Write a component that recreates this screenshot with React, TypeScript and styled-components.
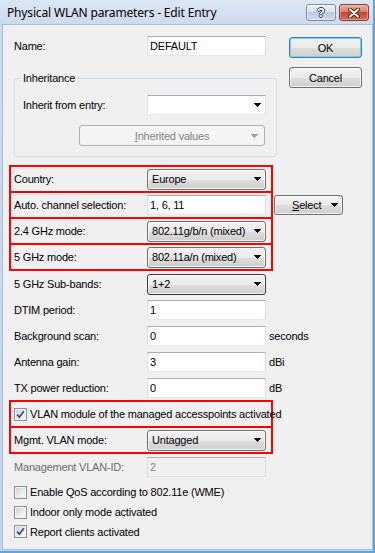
import React from "react";
import styled, { createGlobalStyle, css } from "styled-components";

const GlobalStyle = createGlobalStyle`
  html, body { margin: 0; padding: 0; background: #ffffff; }
  body {
    font-family: "Liberation Sans", Arial, sans-serif;
    font-size: 11px;
    letter-spacing: -0.2px;
    color: #000;
  }
  * { box-sizing: border-box; }
`;

const Window = styled.div`
  width: 375px;
  height: 553px;
  display: flex;
  flex-direction: column;
  background: linear-gradient(#dce7f5 0px, #ccdbee 24px, #c3d5eb 100%);
  border-right: 2px solid #5aa9e3;
  border-bottom: 2px solid #5aa9e3;
  overflow: hidden;
`;

const TitleBar = styled.div`
  height: 24px;
  flex-shrink: 0;
  display: flex;
  align-items: center;
  justify-content: space-between;
  padding: 0 4px 0 7px;
`;

const TitleText = styled.span`
  font-family: "Noto Sans", "Open Sans", sans-serif;
  font-size: 12px;
  letter-spacing: -0.16px;
  color: #000;
  padding-top: 1px;
`;

const CaptionGroup = styled.div`
  align-self: flex-start;
  margin-top: 4px;
  display: flex;
  gap: 3px;
`;

const CaptionButton = styled.div<{ $kind: "help" | "close" }>`
  width: 30px;
  height: 17px;
  border-radius: 3px;
  display: flex;
  align-items: center;
  justify-content: center;
  ${(p) =>
    p.$kind === "help"
      ? css`
          border: 1px solid #7d8ca6;
          background: linear-gradient(#eef3fa 0%, #d6e1f0 45%, #bccde4 50%, #cbd9ec 100%);
          box-shadow: inset 0 0 0 1px rgba(255, 255, 255, 0.5);
        `
      : css`
          border: 1px solid #8a3a2f;
          background: linear-gradient(#eab0a2 0%, #d8806e 45%, #c4432f 50%, #d4705a 100%);
          box-shadow: inset 0 0 0 1px rgba(255, 200, 190, 0.45);
        `}
`;

const HelpGlyph = styled.span`
  font-family: "Liberation Sans", Arial, sans-serif;
  font-weight: bold;
  font-size: 13px;
  line-height: 13px;
  color: #ffffff;
  letter-spacing: 0;
  text-shadow: 1px 0 0 #2b3a57, -1px 0 0 #2b3a57, 0 1px 0 #2b3a57, 0 -1px 0 #2b3a57;
`;

const Client = styled.div`
  flex: 1;
  margin: 0 0 1px 2px;
  border: 1px solid #a6bcd8;
  background: #f0f0f0;
  display: flex;
  padding: 11px 0 0 11px;
`;

const FormColumn = styled.div`
  width: 275px;
  flex-shrink: 0;
  display: flex;
  flex-direction: column;
`;

const ButtonColumn = styled.div`
  display: flex;
  flex-direction: column;
  gap: 9px;
  padding-top: 1px;
`;

const PushButton = styled.div<{ $default?: boolean }>`
  width: 73px;
  height: 21px;
  display: flex;
  align-items: center;
  justify-content: center;
  border-radius: 3px;
  border: 1px solid ${(p) => (p.$default ? "#3c7fb1" : "#707070")};
  background: linear-gradient(#f2f2f2 0%, #ebebeb 50%, #dddddd 51%, #cfcfcf 100%);
  box-shadow: inset 0 0 0 1px ${(p) => (p.$default ? "#6fd2f8" : "rgba(255,255,255,0.75)")};
`;

const Row = styled.div<{ $h?: number; $label?: number }>`
  display: grid;
  grid-template-columns: ${(p) => p.$label ?? 133}px 119px max-content;
  align-items: center;
  height: ${(p) => p.$h ?? 26}px;
`;

const Label = styled.span<{ $disabled?: boolean }>`
  white-space: nowrap;
  color: ${(p) => (p.$disabled ? "#6d6d6d" : "#000")};
`;

const Suffix = styled.span`
  margin-left: 3px;
  white-space: nowrap;
`;

const TextField = styled.div<{ $disabled?: boolean }>`
  width: 119px;
  height: 20px;
  display: flex;
  align-items: center;
  padding: 0 2px;
  background: #ffffff;
  border: 1px solid;
  border-color: #abadb3 #dbdfe6 #e3e9ef #e2e3ea;
  white-space: nowrap;
  ${(p) =>
    p.$disabled &&
    css`
      background: #f0f0f0;
      border-color: #adb2b5 #d9dcdf #dfe3e6 #d9dcdf;
      color: #8a8a8a;
    `}
`;

const DropDown = styled.div<{ $focus?: boolean; $white?: boolean }>`
  width: 119px;
  height: 21px;
  display: flex;
  align-items: center;
  justify-content: space-between;
  padding: 0 4px 0 4px;
  white-space: nowrap;
  border-radius: 3px;
  border: 1px solid ${(p) => (p.$focus ? "#3a3a3a" : "#707070")};
  background: linear-gradient(#f2f2f2 0%, #ebebeb 50%, #dddddd 51%, #cfcfcf 100%);
  box-shadow: inset 0 0 0 1px rgba(255, 255, 255, 0.7);
  ${(p) =>
    p.$white &&
    css`
      height: 20px;
      border-radius: 0;
      background: #ffffff;
      box-shadow: none;
      border-color: #abadb3 #dbdfe6 #e3e9ef #e2e3ea;
    `}
`;

const MenuButton = styled.div`
  margin-left: 8px;
  width: 69px;
  height: 20px;
  display: flex;
  align-items: center;
  justify-content: space-between;
  padding: 0 4px 0 17px;
  border-radius: 3px;
  border: 1px solid #707070;
  background: linear-gradient(#f2f2f2 0%, #ebebeb 50%, #dddddd 51%, #cfcfcf 100%);
  box-shadow: inset 0 0 0 1px rgba(255, 255, 255, 0.75);
`;

const DisabledSplit = styled.div`
  margin-left: 56px;
  width: 186px;
  height: 21px;
  display: grid;
  grid-template-columns: 1fr auto 1fr;
  align-items: center;
  padding: 0 6px 0 6px;
  border-radius: 3px;
  border: 1px solid #adb2b5;
  background: #f4f4f4;
  color: #838383;
  & > svg {
    justify-self: end;
  }
`;

const GroupBox = styled.fieldset`
  margin: 16px 0 0 0;
  width: 263px;
  min-width: 0;
  padding: 10px 9px 10px 8px;
  border: 1px solid #d5dfe5;
  border-radius: 3px;
  display: flex;
  flex-direction: column;
  gap: 10px;
`;

const Legend = styled.legend`
  padding: 0 2px;
  margin-left: -2px;
  line-height: 13px;
  font-size: 11px;
`;

const Highlight = styled.div<{ $top?: number }>`
  margin-top: ${(p) => p.$top ?? 0}px;
  margin-left: -5px;
  width: 264px;
  border: 2px solid #ff0000;
  & > div {
    padding-left: 3px;
    height: 24px;
  }
  & > div + div {
    border-top: 2px solid #ff0000;
    height: 26px;
  }
`;

const CheckRow = styled.div<{ $h?: number; $top?: number }>`
  display: flex;
  align-items: center;
  gap: 3px;
  height: ${(p) => p.$h ?? 20}px;
  margin-top: ${(p) => p.$top ?? 0}px;
  white-space: nowrap;
`;

const CheckBox = styled.span`
  width: 13px;
  height: 13px;
  flex-shrink: 0;
  display: flex;
  align-items: center;
  justify-content: center;
  border: 1px solid #8e8f8f;
  background: linear-gradient(135deg, #c9cdd2 0%, #e9eaec 55%, #fbfbfb 100%);
  box-shadow: inset 0 0 0 1px #f4f4f4;
`;

const Arrow: React.FC<{ color?: string }> = ({ color = "#000" }) => (
  <svg width="7" height="4" viewBox="0 0 7 4" shapeRendering="crispEdges">
    <path d="M0 0h7v1h-1v1h-1v1h-1v1h-1v-1h-1v-1h-1v-1h-1z" fill={color} />
  </svg>
);

const CloseGlyph = () => (
  <svg width="12" height="10" viewBox="0 0 12 10">
    <path d="M2 1.5 L10 8.5 M10 1.5 L2 8.5" stroke="#4e1810" strokeWidth="4" strokeLinecap="round" />
    <path d="M2 1.5 L10 8.5 M10 1.5 L2 8.5" stroke="#ffffff" strokeWidth="2.2" strokeLinecap="round" />
  </svg>
);

const Check: React.FC<{ checked?: boolean }> = ({ checked }) => (
  <CheckBox>
    {checked && (
      <svg width="9" height="9" viewBox="0 0 9 9">
        <path d="M1.2 4.6 L3.4 7.2 L7.8 1.3" fill="none" stroke="#34497f" strokeWidth="1.7" />
      </svg>
    )}
  </CheckBox>
);

const Combo: React.FC<{ value: string; focus?: boolean }> = ({ value, focus }) => (
  <DropDown $focus={focus}>
    <span>{value}</span>
    <Arrow />
  </DropDown>
);

export default function App() {
  return (
    <>
      <GlobalStyle />
      <Window>
        <TitleBar>
          <TitleText>Physical WLAN parameters - Edit Entry</TitleText>
          <CaptionGroup>
            <CaptionButton $kind="help">
              <HelpGlyph>?</HelpGlyph>
            </CaptionButton>
            <CaptionButton $kind="close">
              <CloseGlyph />
            </CaptionButton>
          </CaptionGroup>
        </TitleBar>
        <Client>
          <FormColumn>
            <Row $h={20}>
              <Label>Name:</Label>
              <TextField>DEFAULT</TextField>
            </Row>

            <GroupBox>
              <Legend>Inheritance</Legend>
              <Row $h={20} $label={124}>
                <Label>Inherit from entry:</Label>
                <DropDown $white>
                  <span />
                  <Arrow />
                </DropDown>
              </Row>
              <DisabledSplit>
                <span />
                <span>
                  <u>I</u>nherited values
                </span>
                <Arrow color="#a0a0a0" />
              </DisabledSplit>
            </GroupBox>

            <Highlight $top={8}>
              <Row>
                <Label>Country:</Label>
                <Combo value="Europe" />
              </Row>
              <Row>
                <Label>Auto. channel selection:</Label>
                <TextField>1, 6, 11</TextField>
                <MenuButton>
                  <span>
                    <u>S</u>elect
                  </span>
                  <Arrow />
                </MenuButton>
              </Row>
              <Row>
                <Label>2.4 GHz mode:</Label>
                <Combo value="802.11g/b/n (mixed)" />
              </Row>
              <Row>
                <Label>5 GHz mode:</Label>
                <Combo value="802.11a/n (mixed)" />
              </Row>
            </Highlight>

            <Row>
              <Label>5 GHz Sub-bands:</Label>
              <Combo value="1+2" focus />
            </Row>
            <Row>
              <Label>DTIM period:</Label>
              <TextField>1</TextField>
            </Row>
            <Row>
              <Label>Background scan:</Label>
              <TextField>0</TextField>
              <Suffix>seconds</Suffix>
            </Row>
            <Row>
              <Label>Antenna gain:</Label>
              <TextField>3</TextField>
              <Suffix>dBi</Suffix>
            </Row>
            <Row $h={25}>
              <Label>TX power reduction:</Label>
              <TextField>0</TextField>
              <Suffix>dB</Suffix>
            </Row>

            <Highlight>
              <CheckRow>
                <Check checked />
                <span>VLAN module of the managed accesspoints activated</span>
              </CheckRow>
              <Row>
                <Label>Mgmt. VLAN mode:</Label>
                <Combo value="Untagged" />
              </Row>
            </Highlight>

            <Row $h={25}>
              <Label $disabled>Management VLAN-ID:</Label>
              <TextField $disabled>2</TextField>
            </Row>

            <CheckRow $top={3}>
              <Check />
              <span>Enable QoS according to 802.11e (WME)</span>
            </CheckRow>
            <CheckRow>
              <Check />
              <span>Indoor only mode activated</span>
            </CheckRow>
            <CheckRow $h={19}>
              <Check checked />
              <span>Report clients activated</span>
            </CheckRow>
          </FormColumn>

          <ButtonColumn>
            <PushButton $default>OK</PushButton>
            <PushButton>Cancel</PushButton>
          </ButtonColumn>
        </Client>
      </Window>
    </>
  );
}
